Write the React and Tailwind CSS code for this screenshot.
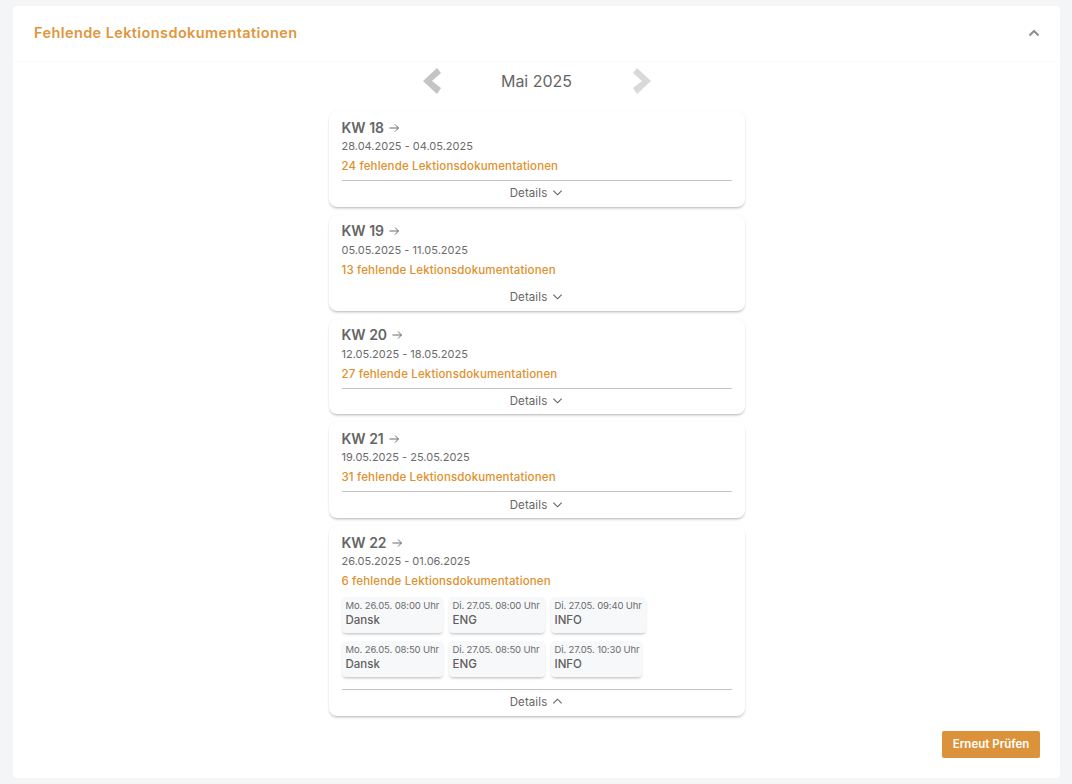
import React from "react";

const font = { fontFamily: "Inter, 'Noto Sans', sans-serif" };

function Arrow() {
  return (
    <svg width="12" height="12" viewBox="0 0 24 24" fill="none" stroke="#6b6b6b" strokeWidth="2" className="ml-1 mt-[1px]">
      <path d="M3 12h18M14 5l7 7-7 7" />
    </svg>
  );
}

function Chevron({ up }) {
  return (
    <svg width="11" height="11" viewBox="0 0 24 24" fill="none" stroke="#5f5f5f" strokeWidth="2.4" className="ml-[5px] -mt-[2px]">
      <path d={up ? "M3 16l9-9 9 9" : "M3 8l9 9 9-9"} />
    </svg>
  );
}

function Slot({ when, name, w }) {
  return (
    <div className={`h-9 rounded bg-[#f7f8fa] pl-1 pt-[2px] shadow-[0_2px_3px_-1px_rgba(0,0,0,0.28)] ${w}`}>
      <div className="text-[9.5px] leading-[14px] tracking-[-0.12px] text-[#6b6b6b] whitespace-nowrap">{when}</div>
      <div className="text-[11.5px] font-medium leading-[15px] text-[#5f5f5f]">{name}</div>
    </div>
  );
}

function Week({ kw, range, count, divider = true, open = false, slots }) {
  return (
    <div className="w-[416px] rounded-lg bg-white px-[13px] pt-[6px] shadow-[0_2px_3px_-1px_rgba(0,0,0,0.3),0_0_2px_rgba(0,0,0,0.05)]">
      <div className="flex h-5 items-center text-[14px] font-semibold text-[#666666]">
        {kw}
        <Arrow />
      </div>
      <div className="mt-[1px] text-[11px] leading-4 text-[#6b6b6b]">{range}</div>
      <div className="mt-[4px] text-[11.5px] font-medium leading-4 tracking-[0.15px] text-[#e08f2c]">{count}</div>
      {slots}
      <div className={`${open ? "mt-3" : "mt-[6px]"} h-px ${divider ? "bg-[#c4c4c4]" : "bg-transparent"}`} />
      <div className="flex h-[25.75px] items-center justify-center text-[11.5px] tracking-[0.1px] text-[#666666]">
        Details
        <Chevron up={open} />
      </div>
    </div>
  );
}

export default function App() {
  return (
    <div style={font} className="h-[784px] bg-[#f4f5f7] pl-[13px] pr-3 pt-[6px]">
      <div className="flex h-[772px] flex-col rounded bg-white">
        <div className="flex h-[55px] flex-none items-center justify-between rounded-t pb-[2px] pl-[21px] pr-5 shadow-[0_1px_1px_rgba(0,0,0,0.02)]">
          <span className="text-[14.5px] font-semibold tracking-[0.4px] text-[#e0963c]">Fehlende Lektionsdokumentationen</span>
          <svg width="12" height="12" viewBox="0 0 24 24" fill="none" stroke="#8f8f8f" strokeWidth="4">
            <path d="M3 17l9-9 9 9" />
          </svg>
        </div>
        <div className="flex flex-1 flex-col items-center">
          <div className="flex h-[50px] w-[228px] flex-none items-center justify-between pb-[10px]">
            <svg width="18" height="26" viewBox="0 0 18 26" fill="#c4c4c4">
              <path d="M14 0l4 5-9 8 9 7-4 6L0 13z" />
            </svg>
            <span className="text-[16px] text-[#666666]">Mai 2025</span>
            <svg width="18" height="26" viewBox="0 0 18 26" fill="#d9d9d9">
              <path d="M4 0L0 5l9 8-9 7 4 6 14-13z" />
            </svg>
          </div>
          <div className="flex flex-col gap-2">
            <Week kw="KW 18" range="28.04.2025 - 04.05.2025" count="24 fehlende Lektionsdokumentationen" />
            <Week kw="KW 19" range="05.05.2025 - 11.05.2025" count="13 fehlende Lektionsdokumentationen" divider={false} />
            <Week kw="KW 20" range="12.05.2025 - 18.05.2025" count="27 fehlende Lektionsdokumentationen" />
            <Week kw="KW 21" range="19.05.2025 - 25.05.2025" count="31 fehlende Lektionsdokumentationen" />
            <Week
              kw="KW 22"
              range="26.05.2025 - 01.06.2025"
              count="6 fehlende Lektionsdokumentationen"
              open
              slots={
                <div className="mt-2 flex flex-col gap-2">
                  <div className="flex gap-[6px]">
                    <Slot w="w-[101px]" when="Mo. 26.05. 08:00 Uhr" name="Dansk" />
                    <Slot w="w-[96px]" when="Di. 27.05. 08:00 Uhr" name="ENG" />
                    <Slot w="w-[95px]" when="Di. 27.05. 09:40 Uhr" name="INFO" />
                  </div>
                  <div className="flex gap-[6px]">
                    <Slot w="w-[101px]" when="Mo. 26.05. 08:50 Uhr" name="Dansk" />
                    <Slot w="w-[96px]" when="Di. 27.05. 08:50 Uhr" name="ENG" />
                    <Slot w="w-[91px]" when="Di. 27.05. 10:30 Uhr" name="INFO" />
                  </div>
                </div>
              }
            />
          </div>
          <div className="mt-[15px] flex w-full justify-end pr-5">
            <button className="h-[27px] w-[98px] rounded-[2px] bg-[#dc923a] pt-[1px] text-[11.5px] font-semibold text-white">Erneut Prüfen</button>
          </div>
        </div>
      </div>
    </div>
  );
}
